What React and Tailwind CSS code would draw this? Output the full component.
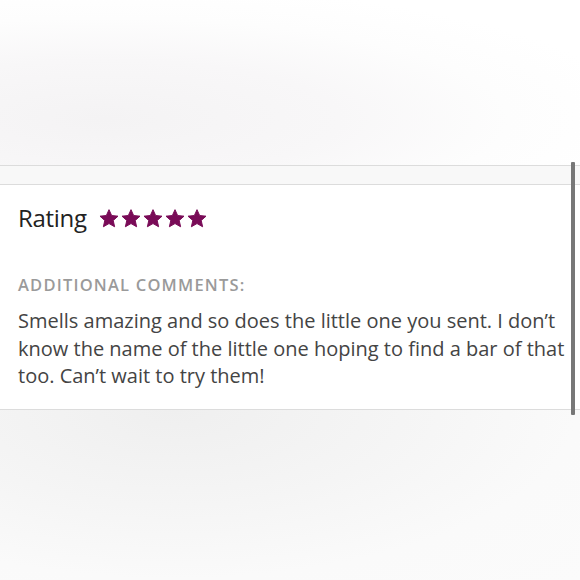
const STARS = [1, 2, 3, 4, 5];

function StarIcon() {
  return (
    <svg width="20" height="19" viewBox="0 0 24 23" className="text-[#790b57]">
      <path
        fill="currentColor"
        d="M12 0.8l3.2 7.1 7.7 0.8-5.8 5.2 1.7 7.6L12 17.6l-6.8 3.9 1.7-7.6L1.1 8.7l7.7-0.8z"
        stroke="currentColor"
        strokeWidth="1.2"
        strokeLinejoin="round"
      />
    </svg>
  );
}

export default function App() {
  return (
    <div className="relative w-[580px] h-[580px] overflow-hidden bg-white font-['Open_Sans',sans-serif]">
      {/* top backdrop */}
      <div className="h-[165px] bg-[radial-gradient(ellipse_at_18%_72%,#f4f3f4_0%,#f8f7f8_35%,#fdfdfd_60%,#ffffff_80%)]" />

      {/* header band */}
      <div className="h-[20px] bg-[#f8f8f8] border-y border-[#dcdcdc]" />

      {/* review body */}
      <div className="bg-white pl-[18px] pt-[17px] h-[224px]">
        <div className="flex items-center gap-[12px]">
          <span className="text-[24px] leading-[32px] text-[#222] font-medium tracking-[-0.3px]">Rating</span>
          <div className="flex items-center gap-[2px] pt-[1px]">
            {STARS.map((s) => (
              <StarIcon key={s} />
            ))}
          </div>
        </div>

        <p className="mt-[41px] text-[16.5px] leading-[20px] tracking-[1.2px] text-[#9a9a9a] font-semibold uppercase">
          Additional comments:
        </p>

        <p className="mt-[12px] w-[548px] text-[20px] leading-[27.5px] text-[#444]">
          Smells amazing and so does the little one you sent. I don’t know the name of the little one hoping to find a bar of that too. Can’t wait to try them!
        </p>
      </div>

      {/* bottom backdrop */}
      <div className="h-[171px] border-t border-[#dcdcdc] bg-[radial-gradient(ellipse_at_30%_0%,#efefef_0%,#f5f5f5_40%,#fafafa_70%,#fbfbfb_100%)]" />

      {/* scrollbar */}
      <div className="absolute left-[571px] top-[162px] w-[4px] h-[253px] bg-[#777] rounded-[1px]" />
    </div>
  );
}
